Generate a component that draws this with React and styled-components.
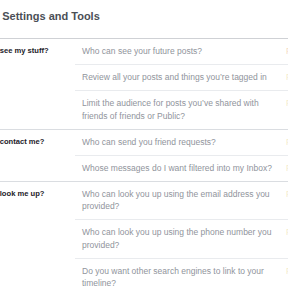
import React from 'react';
import styled, { createGlobalStyle } from 'styled-components';

const GlobalStyle = createGlobalStyle`
    body {
        margin: 0;
        background: #fff;
        font-family: "Liberation Sans", Arial, sans-serif;
    }
`;

const Page = styled.div`
    width: 288px;
    height: 288px;
    overflow: hidden;
    background: #fff;
`;

const Inner = styled.div`
    width: 420px;
    margin-left: -40px;
`;

const Header = styled.h2`
    margin: 0;
    font-size: 11px;
    font-weight: bold;
    color: #4b4f56;
    line-height: 32px;
    padding-bottom: 6px;
    border-bottom: 1px solid #cfd1d5;
`;

const Section = styled.div`
    display: grid;
    grid-template-columns: 115px 1fr;
    border-bottom: 1px solid #dadde1;
`;

const Label = styled.div`
    padding: 6.25px 0 0 6px;
    font-size: 7.6px;
    font-weight: bold;
    line-height: 12.5px;
    color: #1d2129;
`;

const RowList = styled.div`
    display: flex;
    flex-direction: column;
`;

const Row = styled.div`
    display: flex;
    padding: 6.25px 0 6.25px 7px;
    font-size: 8.5px;
    line-height: 12.5px;
    border-top: ${p => (p.first ? 'none' : '1px solid #e9ebee')};
`;

const RowText = styled.div`
    width: 196px;
    color: #90949c;
`;

const RowAction = styled.div`
    margin-left: 8px;
    color: ${p => (p.accent ? '#f5dcc6' : '#f3ecce')};
`;

const sections = [
    {
        label: 'Who can see my stuff?',
        rows: [
            'Who can see your future posts?',
            'Review all your posts and things you\u2019re tagged in',
            'Limit the audience for posts you\u2019ve shared with friends of friends or Public?',
        ],
    },
    {
        label: 'Who can contact me?',
        rows: [
            'Who can send you friend requests?',
            'Whose messages do I want filtered into my Inbox?',
        ],
    },
    {
        label: 'Who can look me up?',
        rows: [
            'Who can look you up using the email address you provided?',
            'Who can look you up using the phone number you provided?',
            'Do you want other search engines to link to your timeline?',
        ],
    },
];

const App = () => (
    <Page>
        <GlobalStyle />
        <Inner>
            <Header>Privacy Settings and Tools</Header>
            {sections.map((section, si) => (
                <Section key={section.label}>
                    <Label>{section.label}</Label>
                    <RowList>
                        {section.rows.map((row, ri) => (
                            <Row key={row} first={ri === 0}>
                                <RowText>{row}</RowText>
                                <RowAction accent={si === 0 && ri === 0}>Friends</RowAction>
                            </Row>
                        ))}
                    </RowList>
                </Section>
            ))}
        </Inner>
    </Page>
);

export default App;
